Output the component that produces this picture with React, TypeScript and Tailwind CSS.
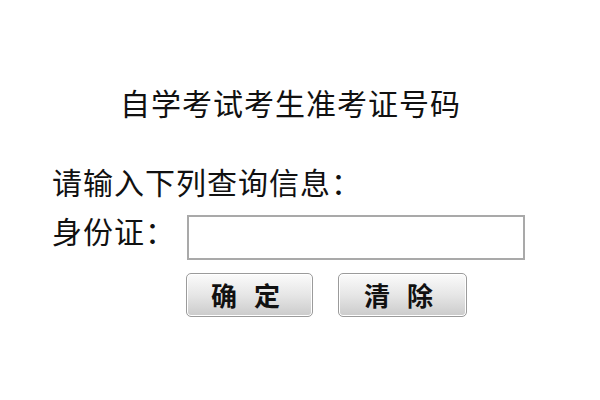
import React from 'react';

const font = { fontFamily: '"Noto Sans CJK SC", "Noto Sans", sans-serif' };

function PushButton({ label, className }: { label: string; className?: string }) {
  return (
    <button
      type="button"
      className={`h-[44px] rounded-[5px] border border-[#9b9b9b] bg-gradient-to-b from-[#fbfbfb] via-[#e6e6e6] to-[#cbcbcb] shadow-[inset_0_0_0_1px_#ffffff] text-[26px] leading-none font-bold text-[#111] tracking-[17px] pl-[9px] ${className ?? ''}`}
    >
      {label}
    </button>
  );
}

export default function App() {
  return (
    <div className="w-[600px] h-[400px] bg-white text-[#111] overflow-hidden" style={font}>
      <div className="pt-[87px] pl-[120px] text-[30px] leading-[30px] tracking-[1px]">自学考试考生准考证号码</div>

      <div className="mt-[49px] pl-[52px] text-[30px] leading-[30px] tracking-[1px]">请输入下列查询信息：</div>

      <div className="mt-[19px] pl-[52px] flex items-start">
        <label className="w-[135px] text-[30px] leading-[30px] tracking-[1px]">身份证：</label>
        <input
          type="text"
          className="w-[338px] h-[45px] border-2 border-[#a9a9a9] bg-white outline-none px-2 text-[18px]"
        />
      </div>

      <div className="mt-[13px] pl-[186px] flex gap-[25px]">
        <PushButton label="确定" className="w-[127px]" />
        <PushButton label="清除" className="w-[129px]" />
      </div>
    </div>
  );
}
